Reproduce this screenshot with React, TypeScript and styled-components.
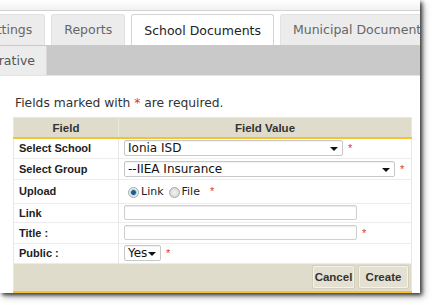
import styled, { createGlobalStyle } from "styled-components";

const GlobalStyle = createGlobalStyle`
    html, body {
        margin: 0;
        padding: 0;
        background: #ffffff;
    }
    body {
        font-family: "DejaVu Sans", Verdana, sans-serif;
        color: #333;
    }
`;

const Stage = styled.div`
    width: 432px;
    height: 305px;
    overflow: hidden;
    background: #ffffff;
`;

const Window = styled.div`
    width: 420px;
    height: 293px;
    overflow: hidden;
    background: #ffffff;
    box-shadow: 2px 2px 4px rgba(0, 0, 0, 0.75), 4px 4px 7px rgba(0, 0, 0, 0.25);
    display: flex;
    flex-direction: column;
`;

const TopStrip = styled.div`
    height: 10px;
    background: linear-gradient(#ffffff, #f1f1f1);
    border-bottom: 1px solid #d2d2d2;
`;

const TabRow = styled.div<{ $shift: number }>`
    display: flex;
    gap: 6px;
    padding-top: 3px;
    height: 31px;
    margin-left: ${(p) => p.$shift}px;
    background: #ffffff;
`;

const Tab = styled.div<{ $active?: boolean }>`
    flex: none;
    display: flex;
    align-items: center;
    padding: 0 12px 2px;
    font-size: 12.5px;
    color: ${(p) => (p.$active ? "#222" : "#666")};
    background: ${(p) => (p.$active ? "#ffffff" : "#ececec")};
    border: 1px solid ${(p) => (p.$active ? "#d4d4d4" : "#e2e2e2")};
    border-bottom: none;
    border-radius: 3px 3px 0 0;
    height: ${(p) => (p.$active ? "31px" : "29px")};
`;

const SubRow = styled.div`
    display: flex;
    height: 29px;
    background: #c9c9c9;
    border-bottom: 1px solid #e4e4e4;
    padding-top: 1px;
`;

const SubTab = styled.div`
    flex: none;
    display: flex;
    align-items: center;
    margin-left: -68px;
    padding: 0 11px 0 12px;
    font-size: 12.5px;
    color: #555;
    background: #ececec;
    border-right: 1px solid #dadada;
`;

const Content = styled.div`
    padding: 20px 8px 0 13px;
`;

const Note = styled.p`
    margin: 0 0 7px 2px;
    font-size: 12.3px;
    color: #333;
    line-height: 14px;
`;

const NoteStar = styled.span`
    color: #e2323f;
`;

const Star = styled.span`
    color: #e2323f;
    font-size: 11px;
    vertical-align: top;
    margin-left: 5px;
    line-height: 10px;
`;

const Table = styled.table`
    width: 399px;
    border-collapse: collapse;
    border: 1px solid #e6e6e6;
    font-family: "Liberation Sans", Tahoma, sans-serif;
`;

const HeadCell = styled.th<{ $w?: number }>`
    width: ${(p) => (p.$w ? `${p.$w}px` : "auto")};
    background: #dfdccb;
    color: #333;
    font-weight: bold;
    font-size: 11.5px;
    height: 19px;
    padding: 0;
    text-align: center;
    border-bottom: 2px solid #f6c233;
    border-right: 1px solid #e9e7dc;
`;

const Row = styled.tr<{ $h: number }>`
    height: ${(p) => p.$h}px;
    border-bottom: 1px solid #ececec;
`;

const Label = styled.td`
    padding: 0 0 0 5px;
    font-weight: bold;
    font-size: 11px;
    color: #222;
    border-right: 1px solid #e6e6e6;
    vertical-align: middle;
`;

const Value = styled.td`
    padding: 0 0 0 5px;
    vertical-align: middle;
`;

const Line = styled.div`
    display: flex;
    align-items: center;
`;

const Select = styled.div<{ $w: number }>`
    width: ${(p) => p.$w}px;
    height: 16px;
    box-sizing: border-box;
    border: 1px solid #c8c8c8;
    border-radius: 2px;
    box-shadow: inset 0 1px 1px rgba(0, 0, 0, 0.06);
    display: flex;
    align-items: center;
    justify-content: space-between;
    padding: 0 4px 0 3px;
    font-family: "DejaVu Sans", Verdana, sans-serif;
    font-size: 12px;
    color: #111;
    background: #fff;
`;

const Caret = styled.span`
    width: 0;
    height: 0;
    border-left: 4px solid transparent;
    border-right: 4px solid transparent;
    border-top: 4px solid #111;
    margin-top: 2px;
`;

const TextInput = styled.div`
    width: 233px;
    height: 15px;
    box-sizing: border-box;
    border: 1px solid #cfcfcf;
    border-radius: 2px;
    box-shadow: inset 0 1px 1px rgba(0, 0, 0, 0.08);
    background: #fff;
`;

const Radio = styled.span<{ $on?: boolean }>`
    width: 11px;
    height: 11px;
    border-radius: 50%;
    box-sizing: border-box;
    border: 1px solid #a9a9a9;
    background: ${(p) =>
        p.$on
            ? "radial-gradient(circle, #1d5f86 0 2px, #6fa9cc 2.5px, #e9eef2 3.5px)"
            : "radial-gradient(circle, #f4f4f4, #cfcfcf)"};
    margin: 2px 2px 0 ${(p) => (p.$on ? "4px" : "0")};
`;

const RadioText = styled.span`
    font-family: "DejaVu Sans", Verdana, sans-serif;
    font-size: 11px;
    color: #222;
    margin-right: 5px;
`;

const Footer = styled.td`
    height: 27px;
    background: #dfdccb;
    border-bottom: 2px solid #f6c233;
    padding: 0 3px 0 0;
`;

const Buttons = styled.div`
    display: flex;
    justify-content: flex-end;
    gap: 5px;
`;

const Button = styled.button<{ $w: number }>`
    width: ${(p) => p.$w}px;
    height: 22px;
    padding: 0;
    font-family: "Liberation Sans", Tahoma, sans-serif;
    font-size: 11.5px;
    font-weight: bold;
    color: #333;
    background: #e4e1d2;
    border: 1px solid #f4f2ea;
    box-shadow: 0 0 0 1px #d3cfbb;
    border-radius: 1px;
`;

const App = () => {
    return (
        <Stage>
            <GlobalStyle />
            <Window>
                <TopStrip />
                <TabRow $shift={-32}>
                    <Tab>Settings</Tab>
                    <Tab>Reports</Tab>
                    <Tab $active>School Documents</Tab>
                    <Tab>Municipal Documents</Tab>
                </TabRow>
                <SubRow>
                    <SubTab>Administrative</SubTab>
                </SubRow>
                <Content>
                    <Note>
                        Fields marked with <NoteStar>*</NoteStar> are required.
                    </Note>
                    <Table>
                        <thead>
                            <tr>
                                <HeadCell $w={104}>Field</HeadCell>
                                <HeadCell>Field Value</HeadCell>
                            </tr>
                        </thead>
                        <tbody>
                            <Row $h={20}>
                                <Label>Select School</Label>
                                <Value>
                                    <Line>
                                        <Select $w={219}>
                                            Ionia ISD <Caret />
                                        </Select>
                                        <Star>*</Star>
                                    </Line>
                                </Value>
                            </Row>
                            <Row $h={21}>
                                <Label>Select Group</Label>
                                <Value>
                                    <Line>
                                        <Select $w={271}>
                                            --IIEA Insurance <Caret />
                                        </Select>
                                        <Star>*</Star>
                                    </Line>
                                </Value>
                            </Row>
                            <Row $h={24}>
                                <Label>Upload</Label>
                                <Value>
                                    <Line>
                                        <Radio $on />
                                        <RadioText>Link</RadioText>
                                        <Radio />
                                        <RadioText>File</RadioText>
                                        <Star>*</Star>
                                    </Line>
                                </Value>
                            </Row>
                            <Row $h={19}>
                                <Label>Link</Label>
                                <Value>
                                    <TextInput />
                                </Value>
                            </Row>
                            <Row $h={21}>
                                <Label>Title :</Label>
                                <Value>
                                    <Line>
                                        <TextInput />
                                        <Star>*</Star>
                                    </Line>
                                </Value>
                            </Row>
                            <Row $h={20}>
                                <Label>Public :</Label>
                                <Value>
                                    <Line>
                                        <Select $w={37}>
                                            Yes <Caret />
                                        </Select>
                                        <Star>*</Star>
                                    </Line>
                                </Value>
                            </Row>
                            <tr>
                                <Footer colSpan={2}>
                                    <Buttons>
                                        <Button $w={41}>Cancel</Button>
                                        <Button $w={49}>Create</Button>
                                    </Buttons>
                                </Footer>
                            </tr>
                        </tbody>
                    </Table>
                </Content>
            </Window>
        </Stage>
    );
};

export default App;
